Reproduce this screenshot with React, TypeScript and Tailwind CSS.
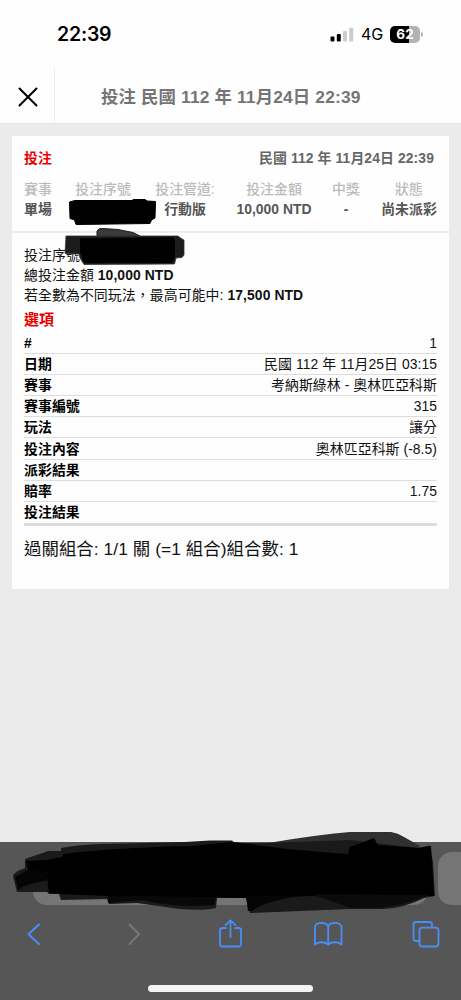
import React from "react";

const columns = [
  { label: "賽事", value: "單場", className: "w-[38px] text-left" },
  { label: "投注序號", value: "", className: "w-[82px] text-center" },
  { label: "投注管道:", value: "行動版", className: "w-[82px] text-center" },
  { label: "投注金額", value: "10,000 NTD", className: "w-[96px] text-center" },
  { label: "中獎", value: "-", className: "w-[48px] text-center" },
  { label: "狀態", value: "尚未派彩", className: "w-[78px] text-center" },
];

const rows = [
  { label: "#", value: "1" },
  { label: "日期", value: "民國 112 年 11月25日 03:15" },
  { label: "賽事", value: "考納斯綠林 - 奧林匹亞科斯" },
  { label: "賽事編號", value: "315" },
  { label: "玩法", value: "讓分" },
  { label: "投注內容", value: "奧林匹亞科斯 (-8.5)" },
  { label: "派彩結果", value: "" },
  { label: "賠率", value: "1.75" },
  { label: "投注結果", value: "" },
];

function StatusBar() {
  return (
    <div className="flex h-[67px] items-start justify-between pl-[57px] pr-[38px] font-['Inter','Liberation_Sans',sans-serif]">
      <span className="mt-[22px] text-[19.5px] leading-6 font-semibold tracking-[-0.2px]">
        22:39
      </span>
      <div className="mt-[26px] flex h-[17px] items-center">
        <svg width="24" height="15" viewBox="0 0 24 15">
          <rect x="0.5" y="9.5" width="4" height="5" rx="1" fill="#000" />
          <rect x="6.8" y="7" width="4" height="7.5" rx="1" fill="#000" />
          <rect x="13" y="4" width="4" height="10.5" rx="1" fill="#ccc" />
          <rect x="19.2" y="0.8" width="4" height="13.7" rx="1" fill="#ccc" />
        </svg>
        <span className="ml-[7px] w-[22px] text-[16px] leading-[17px] font-normal tracking-[-0.2px]">
          4G
        </span>
        <div className="ml-[7px] flex h-[17px] w-[30px] items-center justify-center rounded-[5px] bg-[linear-gradient(to_right,#000_62%,#b3b3b3_62%)] text-[13.5px] font-bold text-white">
          62
        </div>
        <div className="ml-px h-[5px] w-[2px] rounded-r-full bg-[#b3b3b3]" />
      </div>
    </div>
  );
}

function Header() {
  return (
    <div className="flex h-[57px] border-b border-[#e5e5e5]">
      <div className="flex w-[55px] items-center justify-center border-r border-[#eee]">
        <svg width="20" height="20" viewBox="0 0 20 20" className="mt-[4px] ml-px">
          <path
            d="M1.5 1.5 18.5 18.5M18.5 1.5 1.5 18.5"
            stroke="#000"
            strokeWidth="2"
            strokeLinecap="round"
          />
        </svg>
      </div>
      <h1 className="flex-1 pt-[18px] pl-[46px] text-[17.4px] leading-6 font-bold tracking-[0.14px] whitespace-nowrap text-[#757575]">
        投注 民國 112 年 11月24日 22:39
      </h1>
    </div>
  );
}

function Summary() {
  return (
    <section className="relative h-[97px] border-b-2 border-[#ebebeb] pt-[12px] pl-[12px] whitespace-nowrap">
      <div className="flex justify-between pr-[15px] text-[13.9px] leading-5 font-bold tracking-[0.1px]">
        <span className="text-[#ea0000]">投注</span>
        <span className="text-[#666]">民國 112 年 11月24日 22:39</span>
      </div>
      <div className="mt-[11px] flex text-[13.9px] leading-5">
        {columns.map((col) => (
          <div key={col.label} className={col.className}>
            <div className="font-medium text-[#bbb]">{col.label}</div>
            <div className="font-bold text-[#555]">{col.value}</div>
          </div>
        ))}
      </div>
      {/* ticket number is scribbled out */}
      <svg
        className="absolute top-[60px] left-[54px] blur-[0.6px]"
        width="94"
        height="32"
        viewBox="66 196 94 32"
      >
        <path
          d="M75 200.5 132 200.5 133 199.5 145 199.5 147 201 155.5 201.5 155 218 151.5 220 150 223.5 76 224.5 74.5 220 70 218.5 69.5 202Z"
          fill="#000"
          stroke="#000"
          strokeWidth="1"
          strokeLinejoin="round"
        />
      </svg>
    </section>
  );
}

function Details() {
  return (
    <section className="relative px-[12px] pt-[12px] whitespace-nowrap text-[#111]">
      <div className="text-[13.9px] leading-5 tracking-[0.08px]">
        <div>投注序號</div>
        <div>
          總投注金額 <b>10,000 NTD</b>
        </div>
        <div>
          若全數為不同玩法，最高可能中: <b>17,500 NTD</b>
        </div>
      </div>
      <h2 className="mt-[2px] h-[26px] text-[15px] leading-[26px] font-bold text-[#ea0000]">
        選項
      </h2>
      <div className="border-b-[3px] border-[#dcdcdc]">
        {rows.map((row) => (
          <div
            key={row.label}
            className="flex h-[21.1px] items-center justify-between border-b border-[#dcdcdc] text-[13.9px] leading-5 tracking-[0.06px] last:border-b-0"
          >
            <span className="font-bold text-black">{row.label}</span>
            <span>{row.value}</span>
          </div>
        ))}
      </div>
      <p className="mt-[11px] text-[17.4px] leading-6 tracking-[0.06px]">
        過關組合: 1/1 關 (=1 組合)組合數: 1
      </p>
      <svg
        className="absolute -top-[9px] left-[48px] blur-[0.6px]"
        width="130"
        height="46"
        viewBox="60 224 130 46"
      >
        <path
          d="M97 237 97 231Q98 228 103 228.5L118 229.5 133 232.5 140 236 140 239 97 239Z"
          fill="#3a3a3a"
          stroke="#1c1c1c"
          strokeWidth="1"
        />
        <path
          d="M66 236 178 236 182 239 184 240 184 255 182 257.5 176 258 174.5 264 84 264.5 80 258 79 254 65 253.5Z"
          fill="#1c1c1c"
          stroke="#333"
          strokeWidth="0.8"
          strokeLinejoin="round"
        />
        <path
          d="M80 238.5 173 237 175 240 175 257 172 263 84 263 80 252Z"
          fill="#000"
        />
      </svg>
    </section>
  );
}

function BrowserBar() {
  return (
    <div className="relative flex h-[158px] flex-col bg-[#565656]">
      <div className="flex h-[63px] items-end gap-[10px] overflow-hidden pl-[33px]">
        <div className="h-[53px] w-[395px] shrink-0 rounded-[14px] bg-[#757575]" />
        <div className="h-[53px] w-[40px] shrink-0 rounded-[14px] bg-[#757575]" />
      </div>
      <svg
        width="461"
        height="54"
        viewBox="0 905 461 54"
        fill="none"
        stroke="#488ff5"
        strokeWidth="1.8"
        strokeLinecap="round"
        strokeLinejoin="round"
      >
        <path d="M39 924.5 28.5 934.3 39 944" strokeWidth="2.1" />
        <path d="M129.5 924.5 139 934.3 129.5 944" stroke="#777" strokeWidth="2" />
        <path d="M226 928H222.5Q220 928 220 930.5V944Q220 946.5 222.5 946.5H238.5Q241 946.5 241 944V930.5Q241 928 238.5 928H235" />
        <path d="M230.5 937V920.5M225.5 925.2 230.5 920.3 235.5 925.2" />
        <path d="M328.2 926C325.5 921.8 317 922 315 926V944.5C318 941.5 325 941.5 328.2 944.5C331.5 941.5 338.5 941.5 341.5 944.5V926C339 922 331 921.8 328.2 926ZM328.2 926V944.5" />
        <path d="M419 941H416Q413.5 941 413.5 938.5V924.5Q413.5 922 416 922H429.5Q432 922 432 924.5V927" />
        <rect x="419.5" y="927.7" width="19" height="18.8" rx="2.7" />
      </svg>
      <div className="mx-auto mt-[26px] ml-[148px] h-[7px] w-[165px] shrink-0 rounded-full bg-[#f3f3f3]" />

      {/* marker strokes over the address field */}
      <svg
        className="absolute -top-[14px] left-0 blur-[0.7px]"
        width="461"
        height="88"
        viewBox="0 828 461 88"
      >
        <path
          d="M268 843Q315 835 350 832L391 832Q398 833 404 837L420 846 418 858 260 858Z"
          fill="#303030"
        />
        <path
          d="M61 848Q75 845 100 844L185 842 210 840.5 232 840.5 235 843 268 843 350 840 418 848 430 845.5 433 862 435 896 424 898Q404 908 384 909L350 909 250 913 246 898 217 898 216 908Q205 911 180 909L137 903 109 904 107 899 61 900 59 894 49 894 47 892 17 892 13 876Q15 871 25 868L25 859 48 851 61 851Z"
          fill="#1a1a1a"
        />
        <path
          d="M47 860 62 857 63 854Q110 848 190 846L233 842 250 844Q290 850 348 854L350 847 374 838 378 845 419 848 431 846 434 896 312 896 246 898 108 896 60 894 49 893 47 878 29 875 26 861Z"
          fill="#000"
        />
        <path d="M15 877 28 870 48 872 46 881Q27 883 18 890Z" fill="#050505" />
        <path d="M108 896 216 897 214 905Q175 908 142 900L108 903Z" fill="#080808" />
        <path d="M246 896 300 896Q265 901 252 911L248 911Z" fill="#050505" />
        <path d="M310 894 430 895Q400 907 375 908L350 908Q330 900 310 894Z" fill="#0b0b0b" />
      </svg>
    </div>
  );
}

export default function App() {
  return (
    <div className="flex h-[1000px] w-[461px] flex-col overflow-hidden bg-[#ebebeb] font-['Liberation_Sans','Noto_Sans_CJK_TC',sans-serif] text-black">
      <div className="bg-[#fefefe]">
        <StatusBar />
        <Header />
      </div>
      <main className="flex-1 px-[12px] pt-[12px]">
        <div className="h-[453px] bg-[#fefefe]">
          <Summary />
          <Details />
        </div>
      </main>
      <BrowserBar />
    </div>
  );
}
